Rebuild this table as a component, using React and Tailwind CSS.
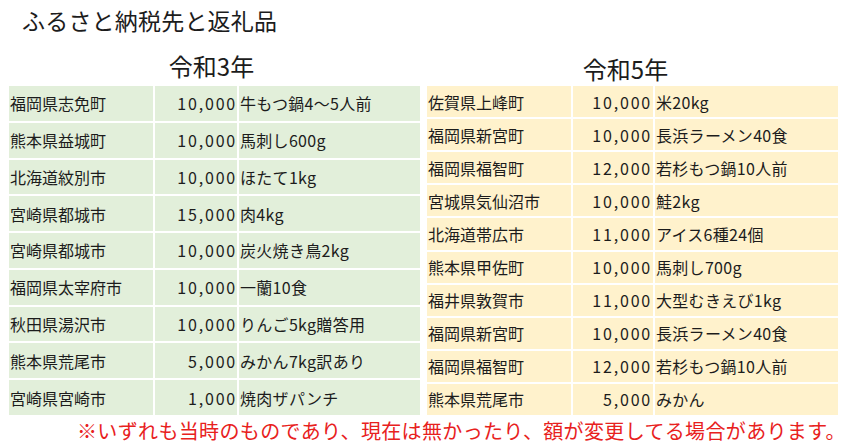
import React from "react";

const left = [
  ["福岡県志免町", "10,000", "牛もつ鍋4～5人前"],
  ["熊本県益城町", "10,000", "馬刺し600g"],
  ["北海道紋別市", "10,000", "ほたて1kg"],
  ["宮崎県都城市", "15,000", "肉4kg"],
  ["宮崎県都城市", "10,000", "炭火焼き鳥2kg"],
  ["福岡県太宰府市", "10,000", "一蘭10食"],
  ["秋田県湯沢市", "10,000", "りんご5kg贈答用"],
  ["熊本県荒尾市", "5,000", "みかん7kg訳あり"],
  ["宮崎県宮崎市", "1,000", "焼肉ザパンチ"],
];

const right = [
  ["佐賀県上峰町", "10,000", "米20kg"],
  ["福岡県新宮町", "10,000", "長浜ラーメン40食"],
  ["福岡県福智町", "12,000", "若杉もつ鍋10人前"],
  ["宮城県気仙沼市", "10,000", "鮭2kg"],
  ["北海道帯広市", "11,000", "アイス6種24個"],
  ["熊本県甲佐町", "10,000", "馬刺し700g"],
  ["福井県敦賀市", "11,000", "大型むきえび1kg"],
  ["福岡県新宮町", "10,000", "長浜ラーメン40食"],
  ["福岡県福智町", "12,000", "若杉もつ鍋10人前"],
  ["熊本県荒尾市", "5,000", "みかん"],
];

function Table({ rows, green }) {
  const bg = green ? "bg-[#e2efda]" : "bg-[#fff2cc]";
  const gridCls = green
    ? "grid grid-cols-[144px_82px_181px] grid-rows-[repeat(9,minmax(0,1fr))] gap-[2px] h-[329px]"
    : "grid grid-cols-[144px_80px_183px] grid-rows-[repeat(10,minmax(0,1fr))] gap-[2px] h-[329px]";
  return (
    <div className={gridCls}>
      {rows.map((r, i) => (
        <React.Fragment key={i}>
          <div className={`${bg} flex items-center pl-[1px] text-[16px] leading-[20px] whitespace-nowrap`}>{r[0]}</div>
          <div className={`${bg} flex items-center justify-end ${green ? "pr-0" : "pr-[1px]"} text-[16px] leading-[20px] tracking-[1.8px] whitespace-nowrap`}>{r[1]}</div>
          <div className={`${bg} flex items-center pl-[1px] text-[16px] leading-[20px] tracking-[0.3px] whitespace-nowrap`}>{r[2]}</div>
        </React.Fragment>
      ))}
    </div>
  );
}

export default function App() {
  return (
    <div
      className="w-[853px] h-[447px] bg-white text-[#1c1c1c] overflow-hidden"
      style={{ fontFamily: '"Noto Sans CJK JP", "Noto Sans", sans-serif' }}
    >
      <div className="h-[45px] pl-[22px] pt-[6px] text-[23px] leading-[28px] tracking-[0.2px]">ふるさと納税先と返礼品</div>
      <div className="flex pl-[9px] gap-[7px]">
        <div className="w-[411px] flex flex-col">
          <div className="h-[41px] pt-[6px] text-[24px] leading-[30px] text-center pr-[6px]">令和3年</div>
          <Table rows={left} green />
        </div>
        <div className="w-[411px] flex flex-col">
          <div className="h-[41px] pt-[9px] text-[24px] leading-[30px] text-center pr-[14px]">令和5年</div>
          <Table rows={right} green={false} />
        </div>
      </div>
      <div className="pl-[77px] mt-[3px] text-[20px] leading-[26px] tracking-[0.35px] text-[#e8211d] whitespace-nowrap">
        ※いずれも当時のものであり、現在は無かったり、額が変更してる場合があります。
      </div>
    </div>
  );
}
